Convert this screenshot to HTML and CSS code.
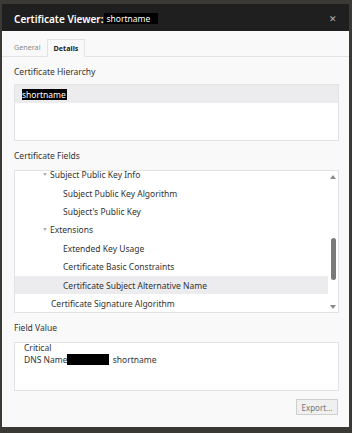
FILE: index.html
```html
<!DOCTYPE html>
<html lang="en">
<head>
    <meta charset="UTF-8" />
    <meta name="viewport" content="width=device-width, initial-scale=1.0" />
    <title>Certificate Viewer</title>
    <link rel="stylesheet" href="styles.css">
</head>
<body>
    <div class="dialog">
        <div class="titlebar">
            <span class="title">Certificate Viewer:</span>
            <span class="title-name">shortname</span>
            <span class="close">&#x2715;</span>
        </div>

        <div class="tabs">
            <span class="tab">General</span>
            <span class="tab active">Details</span>
        </div>

        <div class="content">
            <div class="label label-first">Certificate Hierarchy</div>
            <div class="box hierarchy">
                <div class="hier-row"><span class="mark">shortname</span></div>
            </div>

            <div class="label">Certificate Fields</div>
            <div class="box fields">
                <ul class="tree">
                    <li class="lvl1"><span class="caret"></span>Subject Public Key Info</li>
                    <li class="lvl2">Subject Public Key Algorithm</li>
                    <li class="lvl2">Subject's Public Key</li>
                    <li class="lvl1"><span class="caret"></span>Extensions</li>
                    <li class="lvl2">Extended Key Usage</li>
                    <li class="lvl2">Certificate Basic Constraints</li>
                    <li class="lvl2 selected">Certificate Subject Alternative Name</li>
                    <li class="lvl1">Certificate Signature Algorithm</li>
                </ul>
                <div class="scrollbar">
                    <span class="arrow up"></span>
                    <span class="thumb"></span>
                    <span class="arrow down"></span>
                </div>
            </div>

            <div class="label">Field Value</div>
            <div class="box value">
                <div>Critical</div>
                <div>DNS Name:<span class="redact"></span>shortname</div>
            </div>

            <div class="actions">
                <button class="btn" type="button">Export...</button>
            </div>
        </div>
    </div>
</body>
</html>
```

FILE: styles.css
```css
/* base */
* { box-sizing: border-box; }
html, body { margin: 0; }
body {
    background: #3a3934;
    padding: 4px 3px 6px 2px;
    font-family: 'Noto Sans', 'Open Sans', sans-serif;
    font-size: 8.5px;
    color: #333;
}

.dialog {
    width: 347px;
    height: 423px;
    background: #f9f9f9;
    display: flex;
    flex-direction: column;
}

/* title bar */
.titlebar {
    height: 27px;
    background: #1f1f1f;
    display: flex;
    align-items: center;
    padding: 2px 12px 0 12px;
}
.title { color: #fff; font-size: 10px; font-weight: 600; }
.title-name {
    background: #000;
    color: #fff;
    font-size: 8.5px;
    line-height: 11px;
    padding: 0 8px 0 2px;
    margin-left: 1px;
}
.close { margin-left: auto; color: #b5b5b5; font-size: 9px; }

/* tabs */
.tabs {
    height: 26px;
    border-bottom: 1px solid #e3e3e3;
    display: flex;
    align-items: flex-end;
    padding-left: 12px;
}
.tab {
    height: 18px;
    line-height: 17px;
    font-size: 7.2px;
    padding: 0 6px 0 0;
    color: #8a8a8a;
    margin-bottom: -1px;
}
.tab.active {
    color: #222;
    font-weight: 700;
    padding: 0 6px;
    background: #f9f9f9;
    border: 1px solid #e3e3e3;
    border-bottom-color: #f9f9f9;
}

/* sections */
.content { padding: 0 10px 0 12px; }
.label { height: 12px; line-height: 12px; margin: 9px 0 8px; }
.label-first { margin: 9px 0 6px; }
.box { background: #fff; border: 1px solid #e2e2e2; }

.hierarchy { height: 57px; }
.hier-row {
    height: 18px;
    background: #ececee;
    padding-left: 7px;
    display: flex;
    align-items: center;
}
.mark { background: #000; color: #fff; line-height: 11px; padding-right: 1px; }

/* tree */
.fields { height: 143px; display: flex; overflow: hidden; }
.tree {
    list-style: none;
    margin: -5.5px 0 0;
    padding: 0;
    flex: 1;
}
.tree li {
    height: 18.4px;
    display: flex;
    align-items: center;
    white-space: nowrap;
}
.lvl1 { padding-left: 36px; }
.lvl2 { padding-left: 48px; }
.caret {
    width: 0;
    height: 0;
    border-left: 2.5px solid transparent;
    border-right: 2.5px solid transparent;
    border-top: 3px solid #b0b0b0;
    margin: 0 3px 1px -8px;
}
.selected { background: #ececee; }

.scrollbar {
    width: 10px;
    display: flex;
    flex-direction: column;
    align-items: center;
    padding: 4px 0 3px;
}
.arrow { width: 0; height: 0; border-left: 3px solid transparent; border-right: 3px solid transparent; }
.arrow.up { border-bottom: 4px solid #8a8a8a; }
.arrow.down { border-top: 4px solid #8a8a8a; margin-top: auto; }
.thumb {
    width: 5px;
    height: 42px;
    background: #7a7a7a;
    border-radius: 3px;
    margin-top: 59px;
}

/* field value */
.value { height: 49px; padding: 0 0 0 9px; line-height: 10.5px; }
.redact {
    display: inline-block;
    width: 42px;
    height: 11px;
    background: #000;
    vertical-align: -2px;
    margin: 0 4px 0 -3px;
}

.actions { display: flex; justify-content: flex-end; margin-top: 8px; padding-right: 1px; }
.btn {
    width: 42px;
    height: 16px;
    border: 1px solid #cfcfcf;
    background: #f0f0f0;
    color: #777;
    font-family: inherit;
    font-size: 8px;
    padding: 0;
}
```
